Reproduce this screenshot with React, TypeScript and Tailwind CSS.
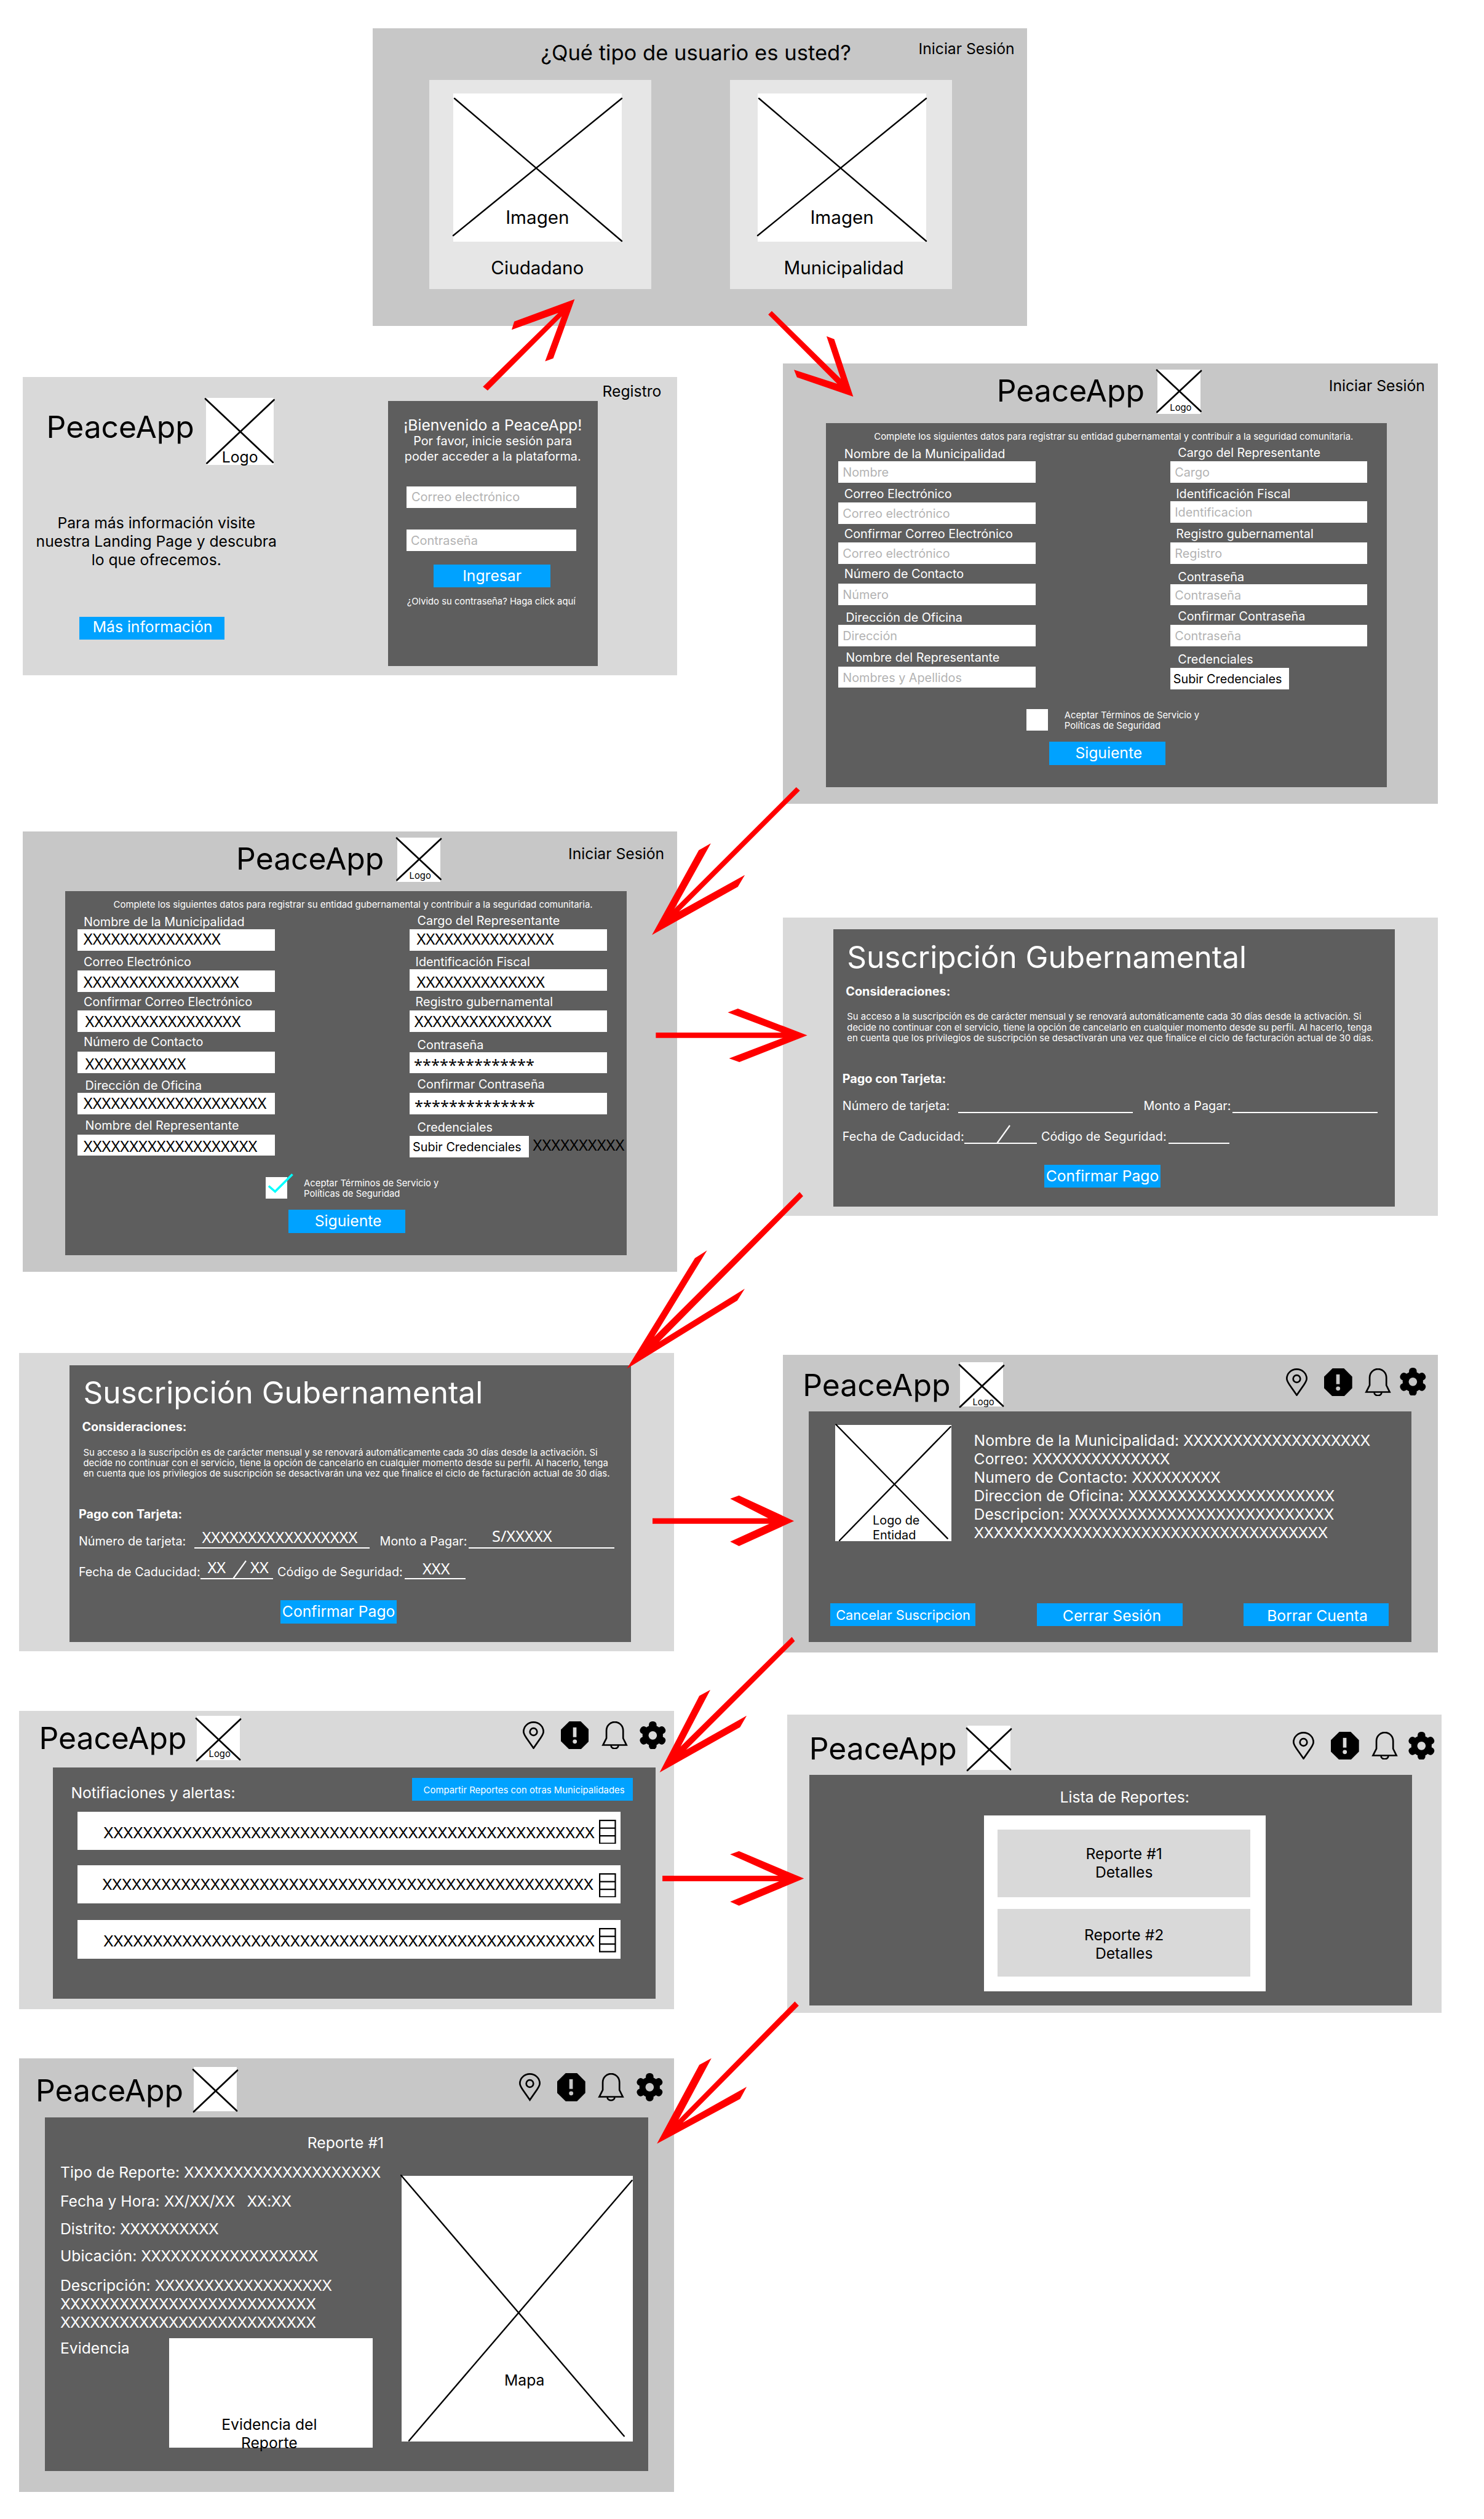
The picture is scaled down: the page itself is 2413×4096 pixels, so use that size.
import React from "react";

type Line = [number, number, number, number];

function Lines({ lines, width = 2.4 }: { lines: Line[]; width?: number }) {
  return (
    <svg className="absolute left-0 top-0 h-full w-full overflow-visible" aria-hidden="true">
      {lines.map(([x1, y1, x2, y2], i) => (
        <line key={i} x1={x1} y1={y1} x2={x2} y2={y2} stroke="black" strokeWidth={width} strokeLinecap="round" />
      ))}
    </svg>
  );
}

const LOGO_HIGH: Line[] = [
  [-1, 0.8, 70.5, 67.8],
  [71, 2, -0.5, 69],
];
const LOGO_LOW: Line[] = [
  [-1, 4.3, 70, 71.3],
  [71, 5.4, 0, 72.8],
];

function Brand({ className = "" }: { className?: string }) {
  return <h2 className={`w-[237px] shrink-0 whitespace-nowrap text-[49.8px] leading-[60px] ${className}`}>PeaceApp</h2>;
}

function Logo({ className = "", lines, label }: { className?: string; lines: Line[]; label?: string }) {
  return (
    <div className={`relative h-[72px] w-[70px] shrink-0 bg-white ${className}`}>
      <Lines lines={lines} width={2.8} />
      {label && <span className={`relative block pl-[20px] text-[14.8px] leading-[18px] ${label}`}>Logo</span>}
    </div>
  );
}

/* Placeholder data set slightly tighter than the surrounding text */
function Data({ children }: { children: React.ReactNode }) {
  return <span className="tracking-[-0.87px]">{children}</span>;
}

function Button({ className = "", children }: { className?: string; children: React.ReactNode }) {
  return (
    <button className={`flex h-[37.4px] shrink-0 items-center justify-center whitespace-nowrap bg-[#00a2ff] text-white ${className}`}>
      {children}
    </button>
  );
}

function PinIcon() {
  return (
    <svg className="h-[45.7px] w-[35px]" viewBox="0 0 117 153" fill="none" stroke="black" strokeWidth="9">
      <path d="M58.5 146 L21 92 C11 77 4.5 68 4.5 56 A54 51.5 0 0 1 112.5 56 C112.5 68 106 77 96 92 Z" />
      <circle cx="58.5" cy="57" r="19.5" />
    </svg>
  );
}

function AlertIcon({ hole }: { hole: string }) {
  return (
    <svg className="ml-[26.8px] h-[45.7px] w-[45.7px]" viewBox="0 0 153 153">
      <polygon points="46,0 108,0 153,45 153,108 108,153 46,153 0,108 0,45" fill="black" />
      <rect x="66" y="33" width="19" height="53" className={hole} />
      <circle cx="76" cy="110" r="11.5" className={hole} />
    </svg>
  );
}

function BellIcon() {
  return (
    <svg className="ml-[20.3px] h-[45.7px] w-[43px]" viewBox="0 0 144 153" fill="none" stroke="black" strokeWidth="9">
      <path d="M8 129 L27 92 V50 A44 45 0 0 1 118 50 V92 L136 129 Z" />
      <path d="M52 131 C53 154 91 154 92 131" />
    </svg>
  );
}

function GearIcon({ hole, className }: { hole: string; className: string }) {
  return (
    <svg className={`h-[45.7px] w-[42.7px] ${className}`} viewBox="0 0 143 154">
      <circle cx="71.5" cy="77" r="56" />
      <rect x="50.5" y="0" width="42" height="154" rx="18" />
      <rect x="50.5" y="0" width="42" height="154" rx="18" transform="rotate(60 71.5 77)" />
      <rect x="50.5" y="0" width="42" height="154" rx="18" transform="rotate(120 71.5 77)" />
      <circle cx="71.5" cy="77" r="23" className={hole} />
    </svg>
  );
}

function IconBar({ className, hole, gear }: { className: string; hole: string; gear: string }) {
  return (
    <nav className={`flex shrink-0 ${className}`}>
      <PinIcon />
      <AlertIcon hole={hole} />
      <BellIcon />
      <GearIcon hole={hole} className={gear} />
    </nav>
  );
}

/* ---------- User type selection ---------- */

function TypeCard({ className, image, label, labelClass }: { className: string; image: string; label: string; labelClass: string }) {
  return (
    <div className={`h-[340.5px] w-[361px] bg-[#e6e6e6] pt-[22.5px] ${className}`}>
      <div className={`relative h-[241px] w-[274.5px] bg-white pt-[183px] text-center ${image}`}>
        <Lines
          lines={[
            [2, 8, 274, 240],
            [274, 8, 0, 231],
          ]}
        />
        <p className="relative text-[29.6px] leading-[36px]">Imagen</p>
        <p className={`relative whitespace-nowrap pt-[46px] text-[29.6px] leading-[36px] ${labelClass}`}>{label}</p>
      </div>
    </div>
  );
}

function UserTypeScreen() {
  return (
    <section className="absolute left-[605.6px] top-[45.5px] h-[484.5px] w-[1064.4px] bg-[#c7c7c7]">
      <header className="flex h-[84.3px]">
        <h1 className="ml-[263px] mt-[19px] w-[526px] whitespace-nowrap text-center text-[34.6px] leading-[40px]">
          ¿Qué tipo de usuario es usted?
        </h1>
        <a className="ml-[99px] mt-[18px] whitespace-nowrap text-[24.7px] leading-[30px]">Iniciar Sesión</a>
      </header>
      <div className="flex">
        <TypeCard className="ml-[92px]" image="ml-[39px]" label="Ciudadano" labelClass="pl-0" />
        <TypeCard className="ml-[128.7px]" image="ml-[44.6px]" label="Municipalidad" labelClass="pl-[6px]" />
      </div>
    </section>
  );
}

/* ---------- Login ---------- */

function LoginScreen() {
  return (
    <section className="absolute left-[36.6px] top-[612.6px] flex h-[485px] w-[1064.6px] bg-[#d9d9d9]">
      <div className="w-[435.4px] shrink-0">
        <div className="flex pt-[34.8px]">
          <Brand className="ml-[39px] mt-[17px]" />
          <div className="relative ml-[22.2px] h-[108.7px] w-[110px] bg-white pt-[80.4px]">
            <Lines
              width={2.8}
              lines={[
                [-1, 1.5, 108.7, 104.8],
                [110.5, 3.3, 1.4, 106.2],
              ]}
            />
            <span className="relative block pl-[26px] text-[24.7px] leading-[30px]">Logo</span>
          </div>
        </div>
        <p className="mt-[78.6px] whitespace-nowrap text-center text-[24.7px] leading-[30px]">
          Para más información visite
          <br />
          nuestra Landing Page y descubra
          <br />
          lo que ofrecemos.
        </p>
        <Button className="ml-[92.7px] mt-[78.2px] w-[235.5px] pb-[5px] pl-[2px] text-[24.7px]">Más información</Button>
      </div>
      <div className="ml-[158.9px] mt-[39.7px] h-[430.3px] w-[340.7px] shrink-0 bg-[#5e5e5e] pt-[23.4px] text-center text-white">
        <p className="whitespace-nowrap text-[24.7px] leading-[30px]">¡Bienvenido a PeaceApp!</p>
        <p className="-mt-[0.6px] whitespace-nowrap text-[19.8px] leading-[25.2px]">
          Por favor, inicie sesión para
          <br />
          poder acceder a la plataforma.
        </p>
        <div className="ml-[30px] mt-[36px] h-[34.5px] w-[276.6px] bg-white pl-[8px] text-left text-[20px] leading-[35px] text-[#b3b3b3]">
          Correo electrónico
        </div>
        <div className="ml-[30px] mt-[34.8px] h-[35.2px] w-[276.6px] bg-white pl-[7px] text-left text-[20px] leading-[36px] text-[#b3b3b3]">
          Contraseña
        </div>
        <Button className="ml-[74.5px] mt-[22.1px] w-[189.5px] text-[24.7px]">Ingresar</Button>
        <p className="mr-[5px] mt-[12.3px] whitespace-nowrap text-[14.8px] leading-[20px]">¿Olvido su contraseña? Haga click aquí</p>
      </div>
      <a className="ml-[8px] mt-[8.4px] text-[24.7px] leading-[30px]">Registro</a>
    </section>
  );
}

/* ---------- Registration ---------- */

type FieldSpec = {
  label: string;
  box: string;
  labelClass: string;
  placeholder: string;
  value: string;
  valueClass: string;
};

const LEFT_FIELDS: FieldSpec[] = [
  { label: "Nombre de la Municipalidad", box: "h-[64.7px]", labelClass: "mt-[5.7px] ml-[10px]", placeholder: "Nombre", value: "XXXXXXXXXXXXXXX", valueClass: "pl-[9.7px] leading-[31px]" },
  { label: "Correo Electrónico", box: "h-[66.8px]", labelClass: "mt-[6.2px] ml-[10px]", placeholder: "Correo electrónico", value: "XXXXXXXXXXXXXXXXX", valueClass: "pl-[9.7px] leading-[36px]" },
  { label: "Confirmar Correo Electrónico", box: "h-[64.9px]", labelClass: "mt-[4px] ml-[10px]", placeholder: "Correo electrónico", value: "XXXXXXXXXXXXXXXXX", valueClass: "pl-[12.5px] leading-[34.5px]" },
  { label: "Número de Contacto", box: "h-[66.9px]", labelClass: "mt-[4.1px] ml-[10px]", placeholder: "Número", value: "XXXXXXXXXXX", valueClass: "pl-[12.5px] leading-[39.5px]" },
  { label: "Dirección de Oficina", box: "h-[67.3px]", labelClass: "mt-[8.8px] ml-[12.5px]", placeholder: "Dirección", value: "XXXXXXXXXXXXXXXXXXXX", valueClass: "pl-[9.7px] leading-[32.5px]" },
  { label: "Nombre del Representante", box: "h-[67.3px]", labelClass: "mt-[6.5px] ml-[12.5px]", placeholder: "Nombres y Apellidos", value: "XXXXXXXXXXXXXXXXXXX", valueClass: "pl-[9.7px] leading-[37.5px]" },
];

const RIGHT_FIELDS: FieldSpec[] = [
  { label: "Cargo del Representante", box: "h-[64.7px]", labelClass: "mt-[3.9px] ml-[12.5px]", placeholder: "Cargo", value: "XXXXXXXXXXXXXXX", valueClass: "pl-[11.5px] leading-[31px]" },
  { label: "Identificación Fiscal", box: "h-[64.4px]", labelClass: "mt-[6.5px] ml-[9.5px]", placeholder: "Identificacion", value: "XXXXXXXXXXXXXX", valueClass: "pl-[11.5px] leading-[41.5px]" },
  { label: "Registro gubernamental", box: "h-[67.3px]", labelClass: "mt-[6.4px] ml-[9.5px]", placeholder: "Registro", value: "XXXXXXXXXXXXXXX", valueClass: "pl-[7.7px] leading-[34.5px]" },
  { label: "Contraseña", box: "h-[66.9px]", labelClass: "mt-[8.9px] ml-[12.5px]", placeholder: "Contraseña", value: "**************", valueClass: "pl-[7px] leading-[41px]" },
  { label: "Confirmar Contraseña", box: "h-[67.3px]", labelClass: "mt-[6.5px] ml-[12.5px]", placeholder: "Contraseña", value: "**************", valueClass: "pl-[8px] leading-[42px]" },
];

function Field({ spec, filled }: { spec: FieldSpec; filled: boolean }) {
  return (
    <div className={`flex flex-col ${spec.box}`}>
      <label className={`whitespace-nowrap text-[19.8px] leading-[24px] text-white ${spec.labelClass}`}>{spec.label}</label>
      <div className="mt-auto h-[34.6px] bg-white">
        {filled ? (
          <div className={`whitespace-nowrap font-['Noto_Sans'] text-[25.4px] text-black ${spec.valueClass}`}>{spec.value}</div>
        ) : (
          <div className="pl-[7.5px] text-[19.8px] leading-[36px] text-[#b3b3b3]">{spec.placeholder}</div>
        )}
      </div>
    </div>
  );
}

function RegisterScreen({ className, filled }: { className: string; filled: boolean }) {
  return (
    <section className={`absolute h-[716.4px] w-[1064.4px] bg-[#c7c7c7] ${className}`}>
      <header className="flex h-[96.8px]">
        <Brand className="ml-[347.5px] mt-[14.1px]" />
        <Logo className="ml-[24.5px] mt-[10px]" lines={LOGO_HIGH} label="pt-[53px]" />
        <a className="ml-[208.5px] mt-[20.8px] whitespace-nowrap text-[24.7px] leading-[30px]">Iniciar Sesión</a>
      </header>
      <div className="ml-[69.5px] h-[592px] w-[912.7px] bg-[#5e5e5e] pt-[12.5px] text-white">
        <p className="w-[936px] whitespace-nowrap text-center text-[14.93px] leading-[20px]">
          Complete los siguientes datos para registrar su entidad gubernamental y contribuir a la seguridad comunitaria.
        </p>
        <div className="flex">
          <div className="ml-[20px] w-[320.8px]">
            {LEFT_FIELDS.map((f) => (
              <Field key={f.label} spec={f} filled={filled} />
            ))}
          </div>
          <div className="ml-[219.2px] w-[320.6px]">
            {RIGHT_FIELDS.map((f) => (
              <Field key={f.label} spec={f} filled={filled} />
            ))}
            <p className="ml-[12.5px] mt-[8.9px] text-[19.8px] leading-[24px]">Credenciales</p>
            <div className="mt-[2.2px] flex h-[34.6px]">
              <button className="w-[193.5px] shrink-0 whitespace-nowrap bg-white pl-[5px] text-left text-[19.8px] leading-[36px] text-black">
                Subir Credenciales
              </button>
              {filled && (
                <span className="-mt-[0.8px] ml-[7px] whitespace-nowrap font-['Noto_Sans'] text-[25.4px] leading-[30px] text-black">XXXXXXXXXX</span>
              )}
            </div>
          </div>
        </div>
        <div className="mt-[32.4px] flex">
          <div className="relative ml-[326px] h-[35px] w-[35px] bg-white">
            {filled && (
              <svg className="absolute left-0 top-0 h-full w-full overflow-visible">
                <polyline points="4.9,14.5 15.3,23.5 43.5,-4.5" fill="none" stroke="cyan" strokeWidth="3.6" />
              </svg>
            )}
          </div>
          <p className="ml-[27px] mt-[1.6px] whitespace-nowrap text-[14.8px] leading-[17.6px]">
            Aceptar Términos de Servicio y
            <br />
            Políticas de Seguridad
          </p>
        </div>
        <Button className="ml-[363.4px] mt-[16.5px] w-[189.2px] pl-[4px] text-[24.7px]">Siguiente</Button>
      </div>
    </section>
  );
}

/* ---------- Subscription ---------- */

function Blank({ className, value, valueClass = "", slash = false }: { className: string; value?: string; valueClass?: string; slash?: boolean }) {
  return (
    <span className={`relative h-[36px] shrink-0 border-b-[2.5px] border-white ${className}`}>
      {value && (
        <span className={`block whitespace-pre font-['Noto_Sans'] text-[25.4px] leading-[30px] ${valueClass}`}>{value}</span>
      )}
      {slash && (
        <svg className="absolute left-0 top-0 h-full w-full overflow-visible">
          <line x1="53.5" y1="34.5" x2="74" y2="6" stroke="white" strokeWidth="2.2" />
        </svg>
      )}
    </span>
  );
}

function SubscriptionScreen({ className, filled }: { className: string; filled: boolean }) {
  return (
    <section className={`absolute h-[485.4px] w-[1064.3px] bg-[#d9d9d9] pt-[19.8px] ${className}`}>
      <div className="ml-[82px] h-[450.2px] w-[912.8px] bg-[#5e5e5e] pt-[14.6px] text-white">
        <h2 className="ml-[22px] whitespace-nowrap text-[49.5px] leading-[60px]">Suscripción Gubernamental</h2>
        <h3 className="ml-[20px] mt-[13.8px] text-[19.8px] font-bold leading-[24px]">Consideraciones:</h3>
        <p className="ml-[22px] mt-[21.5px] whitespace-nowrap text-[14.87px] leading-[17.3px]">
          Su acceso a la suscripción es de carácter mensual y se renovará automáticamente cada 30 días desde la activación. Si
          <br />
          decide no continuar con el servicio, tiene la opción de cancelarlo en cualquier momento desde su perfil. Al hacerlo, tenga
          <br />
          en cuenta que los privilegios de suscripción se desactivarán una vez que finalice el ciclo de facturación actual de 30 días.
        </p>
        <h3 className="ml-[14.5px] mt-[44.4px] text-[19.8px] font-bold leading-[24px]">Pago con Tarjeta:</h3>
        <div className="mt-[8.5px] flex items-end">
          <span className="ml-[14.5px] w-[188.5px] shrink-0 whitespace-nowrap text-[19.8px] leading-[24px]">Número de tarjeta:</span>
          <Blank className="w-[284.2px]" value={filled ? "XXXXXXXXXXXXXXXXX" : undefined} valueClass="pl-[12px] mt-[1.7px]" />
          <span className="ml-[17px] w-[144.4px] shrink-0 whitespace-nowrap text-[19.8px] leading-[24px]">Monto a Pagar:</span>
          <Blank className="w-[236.6px]" value={filled ? "S/XXXXX" : undefined} valueClass="pl-[38px]" />
        </div>
        <div className="mt-[13.8px] flex items-end">
          <span className="ml-[14.5px] w-[198.6px] shrink-0 whitespace-nowrap text-[19.8px] leading-[24px]">Fecha de Caducidad:</span>
          <Blank className="w-[117.6px]" slash value={filled ? "XX" : undefined} valueClass="pl-[11px] mt-[0.7px]" />
          {filled && (
            <span className="-ml-[37px] mb-[5.6px] w-[37px] font-['Noto_Sans'] text-[25.4px] leading-[30px]">XX</span>
          )}
          <span className="ml-[7px] w-[206.8px] shrink-0 whitespace-nowrap text-[19.8px] leading-[24px]">Código de Seguridad:</span>
          <Blank className="w-[99.2px]" value={filled ? "XXX" : undefined} valueClass="pl-[29px] mt-[2.7px]" />
        </div>
        <Button className="ml-[342.7px] mt-[34px] w-[189.1px] text-[24.7px]">Confirmar Pago</Button>
      </div>
    </section>
  );
}

/* ---------- Profile ---------- */

function ProfileScreen() {
  return (
    <section className="absolute left-[1273.3px] top-[2202.6px] h-[484.4px] w-[1064.3px] bg-[#c7c7c7]">
      <header className="flex h-[92.1px]">
        <Brand className="ml-[32px] mt-[19.5px]" />
        <Logo className="ml-[19.2px] mt-[12.7px]" lines={LOGO_LOW} label="pt-[56px]" />
        <IconBar className="ml-[460px] mt-[22px]" hole="fill-[#c7c7c7]" gear="-mt-[1px] ml-[13.6px]" />
      </header>
      <div className="ml-[41.8px] h-[375.6px] w-[980px] bg-[#5e5e5e] pt-[22.5px] text-white">
        <div className="flex">
          <div className="relative ml-[42.5px] h-[189px] w-[189px] bg-white pt-[142.7px] text-black">
            <Lines
              lines={[
                [1.4, -0.5, 182.7, 184.6],
                [187.6, 3, 7, 188],
              ]}
            />
            <p className="relative ml-[61.5px] whitespace-nowrap text-[19.8px] leading-[24.6px]">
              Logo de
              <br />
              Entidad
            </p>
          </div>
          <p className="ml-[37px] mt-[11.3px] whitespace-nowrap text-[24.7px] leading-[29.9px]">
            Nombre de la Municipalidad: <Data>XXXXXXXXXXXXXXXXXXX</Data>
            <br />
            Correo: <Data>XXXXXXXXXXXXXX</Data>
            <br />
            Numero de Contacto: <Data>XXXXXXXXX</Data>
            <br />
            Direccion de Oficina: <Data>XXXXXXXXXXXXXXXXXXXXX</Data>
            <br />
            Descripcion: <Data>XXXXXXXXXXXXXXXXXXXXXXXXXXX</Data>
            <br />
            <Data>XXXXXXXXXXXXXXXXXXXXXXXXXXXXXXXXXXXX</Data>
          </p>
        </div>
        <div className="mt-[99px] flex">
          <Button className="ml-[35.4px] w-[236px] pt-[2px] text-[21.7px]">Cancelar Suscripcion</Button>
          <Button className="ml-[99.8px] w-[236.3px] pl-[7px] pt-[4px] text-[24.7px]">Cerrar Sesión</Button>
          <Button className="ml-[99.3px] w-[236.3px] pl-[4px] pt-[4px] text-[24.7px]">Borrar Cuenta</Button>
        </div>
      </div>
    </section>
  );
}

/* ---------- Notifications ---------- */

function AlertRow({ className, text }: { className: string; text: string }) {
  return (
    <div className={`relative ml-[39.7px] flex h-[62.7px] w-[883px] bg-white text-black ${className}`}>
      <p className={`w-[848.5px] shrink-0 whitespace-nowrap text-[24.7px] leading-[30px] ${text}`}>
        <Data>XXXXXXXXXXXXXXXXXXXXXXXXXXXXXXXXXXXXXXXXXXXXXXXXXX</Data>
      </p>
      <svg className="mt-[13px] h-[39.6px] w-[27.6px]" viewBox="0 0 27.6 39.6" fill="none" stroke="black" strokeWidth="2.2">
        <rect x="1.1" y="1.1" width="25.4" height="37.4" />
        <path d="M1 13.6H26.5M1 26.2H26.5" />
      </svg>
    </div>
  );
}

function NotificationsScreen() {
  return (
    <section className="absolute left-[31.4px] top-[2782px] h-[485.3px] w-[1064.3px] bg-[#d9d9d9]">
      <header className="flex h-[92.1px]">
        <Brand className="ml-[32px] mt-[14.4px]" />
        <Logo className="ml-[19.2px] mt-[7.5px]" lines={LOGO_LOW} label="pt-[53.5px]" />
        <IconBar className="ml-[460.2px] mt-[16.8px]" hole="fill-[#d9d9d9]" gear="ml-[19.8px]" />
      </header>
      <div className="ml-[54.5px] h-[375.6px] w-[980px] bg-[#5e5e5e] text-white">
        <div className="flex h-[71.6px]">
          <p className="ml-[29.5px] mt-[26.3px] w-[554.7px] shrink-0 text-[24.7px] leading-[30px]">Notifiaciones y alertas:</p>
          <Button className="mt-[16.9px] w-[359px] pl-[5px] pt-[2.5px] text-[14.9px]">Compartir Reportes con otras Municipalidades</Button>
        </div>
        <AlertRow className="" text="pl-[42.5px] pt-[19px]" />
        <AlertRow className="mt-[24.4px]" text="pl-[40.3px] pt-[16.4px]" />
        <AlertRow className="mt-[26.8px]" text="pl-[42.5px] pt-[18.6px]" />
      </div>
    </section>
  );
}

/* ---------- Report list ---------- */

function ReportListScreen() {
  return (
    <section className="absolute left-[1279.7px] top-[2788.2px] h-[485.2px] w-[1064.3px] bg-[#d9d9d9]">
      <header className="flex h-[97.4px]">
        <Brand className="ml-[36px] mt-[24.5px]" />
        <Logo className="ml-[20.2px] mt-[17.6px]" lines={LOGO_LOW} />
        <IconBar className="ml-[459.6px] mt-[27.4px]" hole="fill-[#d9d9d9]" gear="ml-[16.6px]" />
      </header>
      <div className="ml-[36.8px] h-[375.6px] w-[980px] bg-[#5e5e5e] pt-[21.1px]">
        <p className="ml-[283.2px] w-[458px] text-center text-[24.7px] leading-[30px] text-white">Lista de Reportes:</p>
        <div className="ml-[283.2px] mt-[15.8px] flex h-[286px] w-[458.2px] flex-col gap-[19.6px] bg-white pl-[22.7px] pt-[22.5px]">
          <div className="h-[109.6px] w-[410.7px] bg-[#d9d9d9] pt-[23.6px] text-center text-[24.7px] leading-[30px]">
            Reporte #1
            <br />
            Detalles
          </div>
          <div className="h-[109.6px] w-[410.7px] bg-[#d9d9d9] pt-[26.4px] text-center text-[24.7px] leading-[30px]">
            Reporte #2
            <br />
            Detalles
          </div>
        </div>
      </div>
    </section>
  );
}

/* ---------- Report detail ---------- */

function ReportDetailScreen() {
  return (
    <section className="absolute left-[31.4px] top-[3346.7px] h-[705.6px] w-[1064.3px] bg-[#c7c7c7]">
      <header className="flex h-[96.4px]">
        <Brand className="ml-[26.5px] mt-[22px]" />
        <Logo className="ml-[20.3px] mt-[14.8px]" lines={LOGO_LOW} />
        <IconBar className="ml-[459px] mt-[24.3px]" hole="fill-[#c7c7c7]" gear="ml-[20px]" />
      </header>
      <div className="ml-[41.8px] h-[575px] w-[980.5px] bg-[#5e5e5e] pt-[26.4px] text-white">
        <p className="pr-[3px] text-center text-[24.7px] leading-[30px]">Reporte #1</p>
        <div className="flex">
          <div className="ml-[24.8px] w-[555.2px] shrink-0 whitespace-nowrap text-[24.7px] leading-[30px]">
            <p className="mt-[17.6px]">
              Tipo de Reporte: <Data>XXXXXXXXXXXXXXXXXXXX</Data>
            </p>
            <p className="mt-[17.2px] whitespace-pre">
              Fecha y Hora: <span className="tracking-[-0.45px]">XX/XX/XX   XX:XX</span>
            </p>
            <p className="mt-[14.5px]">
              Distrito: <Data>XXXXXXXXXX</Data>
            </p>
            <p className="mt-[14.5px]">
              Ubicación: <Data>XXXXXXXXXXXXXXXXXX</Data>
            </p>
            <p className="mt-[17.3px]">
              Descripción: <Data>XXXXXXXXXXXXXXXXXX</Data>
              <br />
              <Data>XXXXXXXXXXXXXXXXXXXXXXXXXX</Data>
              <br />
              <Data>XXXXXXXXXXXXXXXXXXXXXXXXXX</Data>
            </p>
            <div className="mt-[11.1px] flex">
              <p className="mt-[1.5px] w-[177px]">Evidencia</p>
              <div className="h-[178.4px] w-[330.7px] bg-white pr-[5px] pt-[125.5px] text-center text-black">
                Evidencia del
                <br />
                Reporte
              </div>
            </div>
          </div>
          <div className="relative mt-[38.6px] h-[432.2px] w-[376px] shrink-0 bg-white pl-[23px] pt-[317px] text-center text-black">
            <Lines
              lines={[
                [-0.8, -0.8, 361.8, 423.2],
                [374.6, 7.5, 12, 430.7],
              ]}
            />
            <p className="relative text-[24.7px] leading-[30px]">Mapa</p>
          </div>
        </div>
      </div>
    </section>
  );
}

/* ---------- Flow arrows ---------- */

const ARROWS = [
  "1043.6,543.5 933.9,583.8 929.2,599 1014,568.2 877,702.2 885.6,709.2 1020.2,574.3 989.9,656.3 1004.7,651",
  "1549.5,720.5 1515,616 1501,610.7 1527,688 1401.5,564.8 1395.2,571.3 1520.5,697 1441.9,671.5 1447.3,685.3",
  "1184,1698 1269,1544.3 1291,1531.7 1224.7,1650.7 1446,1429.7 1452.7,1435.7 1233.3,1655.3 1352.7,1589 1340,1610.7",
  "1466,1880.5 1340,1831.7 1321.7,1838.7 1419.3,1875.3 1191,1875.3 1191,1885 1421.7,1885 1324,1922.3 1342.7,1929",
  "1138.5,2485.8 1262,2285 1284,2271 1188,2428 1452.2,2165 1458.5,2172.4 1197,2437 1352.5,2340.5 1339,2362",
  "1198,3219 1270,3080 1290,3069 1236,3172 1438,2973 1443.5,2980.6 1246,3178 1356,3116 1344,3137",
  "1442,2762.4 1342,2716 1326,2722 1395,2757.4 1185,2757.4 1185,2767.5 1397,2767.5 1326,2800 1342,2808",
  "1460,3411.8 1342,3362 1326,3368 1413,3406.8 1203,3406.8 1203,3416.8 1415,3416.8 1326,3454 1342,3461",
  "1193,3893.5 1270,3750 1292,3738 1232,3850 1443.5,3635.2 1450.6,3642.6 1240,3855 1356,3790 1344,3812",
];

function Arrows() {
  return (
    <svg className="pointer-events-none absolute left-0 top-0 h-full w-full" viewBox="0 0 2695 4575" preserveAspectRatio="none" aria-hidden="true">
      {ARROWS.map((points) => (
        <polygon key={points} points={points} fill="red" />
      ))}
    </svg>
  );
}

export default function App() {
  return (
    <main className="relative h-[4096px] w-[2413px] overflow-hidden bg-white font-['Inter',sans-serif] text-black">
      <UserTypeScreen />
      <LoginScreen />
      <RegisterScreen className="left-[1273.3px] top-[591px]" filled={false} />
      <RegisterScreen className="left-[36.6px] top-[1352px]" filled />
      <SubscriptionScreen className="left-[1273.3px] top-[1491.7px]" filled={false} />
      <SubscriptionScreen className="left-[31.4px] top-[2200px]" filled />
      <ProfileScreen />
      <NotificationsScreen />
      <ReportListScreen />
      <ReportDetailScreen />
      <Arrows />
    </main>
  );
}
